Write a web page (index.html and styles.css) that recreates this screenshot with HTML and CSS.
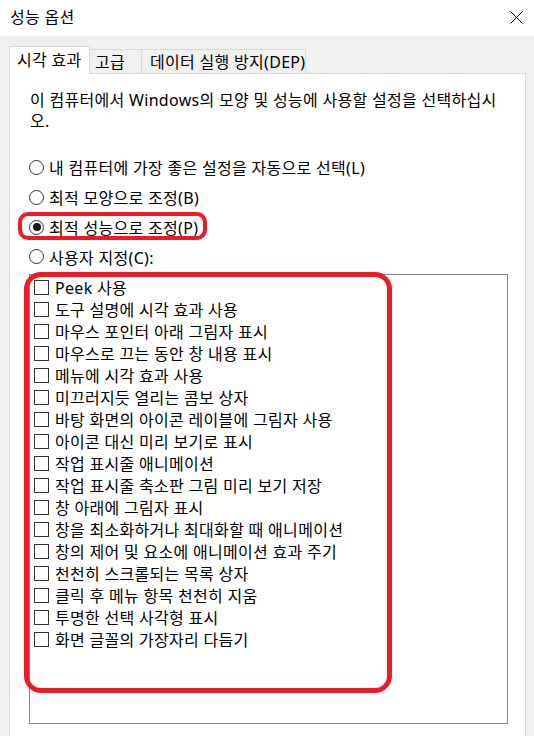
FILE: index.html
```html
<!DOCTYPE html>
<html lang="ko">
<head>
<meta charset="utf-8">
<title>성능 옵션</title>
<link rel="stylesheet" href="styles.css">
</head>
<body>
<div class="window">
  <div class="titlebar">
    <span class="title">성능 옵션</span>
    <svg class="close" width="13" height="13" viewBox="0 0 13 13"><path d="M0.5 0.5 L12.5 12.5 M12.5 0.5 L0.5 12.5" stroke="#000" stroke-width="1" fill="none"/></svg>
  </div>
  <div class="tabs">
    <div class="tab active">시각 효과</div>
    <div class="tab t2">고급</div>
    <div class="tab t3">데이터 실행 방지(DEP)</div>
  </div>
  <div class="panel">
    <p class="desc">이 컴퓨터에서 Windows의 모양 및 성능에 사용할 설정을 선택하십시<br>오.</p>
    <div class="radios">
      <div class="radio-row"><span class="radio"></span><span>내 컴퓨터에 가장 좋은 설정을 자동으로 선택(L)</span></div>
      <div class="radio-row"><span class="radio"></span><span>최적 모양으로 조정(B)</span></div>
      <div class="radio-row"><span class="radio checked"></span><span>최적 성능으로 조정(P)</span></div>
      <div class="radio-row"><span class="radio"></span><span>사용자 지정(C):</span></div>
    </div>
    <div class="listbox">
      <div class="item"><span class="check"></span><span>Peek 사용</span></div>
      <div class="item"><span class="check"></span><span>도구 설명에 시각 효과 사용</span></div>
      <div class="item"><span class="check"></span><span>마우스 포인터 아래 그림자 표시</span></div>
      <div class="item"><span class="check"></span><span>마우스로 끄는 동안 창 내용 표시</span></div>
      <div class="item"><span class="check"></span><span>메뉴에 시각 효과 사용</span></div>
      <div class="item"><span class="check"></span><span>미끄러지듯 열리는 콤보 상자</span></div>
      <div class="item"><span class="check"></span><span>바탕 화면의 아이콘 레이블에 그림자 사용</span></div>
      <div class="item"><span class="check"></span><span>아이콘 대신 미리 보기로 표시</span></div>
      <div class="item"><span class="check"></span><span>작업 표시줄 애니메이션</span></div>
      <div class="item"><span class="check"></span><span>작업 표시줄 축소판 그림 미리 보기 저장</span></div>
      <div class="item"><span class="check"></span><span>창 아래에 그림자 표시</span></div>
      <div class="item"><span class="check"></span><span>창을 최소화하거나 최대화할 때 애니메이션</span></div>
      <div class="item"><span class="check"></span><span>창의 제어 및 요소에 애니메이션 효과 주기</span></div>
      <div class="item"><span class="check"></span><span>천천히 스크롤되는 목록 상자</span></div>
      <div class="item"><span class="check"></span><span>클릭 후 메뉴 항목 천천히 지움</span></div>
      <div class="item"><span class="check"></span><span>투명한 선택 사각형 표시</span></div>
      <div class="item"><span class="check"></span><span>화면 글꼴의 가장자리 다듬기</span></div>
    </div>
  </div>
  <div class="mark mark-small"></div>
  <div class="mark mark-big"></div>
</div>
</body>
</html>
```

FILE: styles.css
```css
* { box-sizing: border-box; }
html, body {
  margin: 0;
  padding: 0;
}
body {
  width: 534px;
  height: 736px;
  overflow: hidden;
  background: #f0f0f0;
  font-family: "Noto Sans", "Noto Sans CJK KR", sans-serif;
  font-size: 16px;
  letter-spacing: 0.3px;
  color: #000;
}
.window {
  position: relative;
  width: 534px;
  height: 736px;
  overflow: hidden;
}
.titlebar {
  height: 36px;
  background: #fff;
  display: flex;
  align-items: center;
  justify-content: space-between;
  padding: 0 11px 0 10px;
}
.title {
  line-height: 20px;
  margin-top: -2px;
}
.close {
  display: block;
  margin-top: -2px;
}
.tabs {
  display: flex;
  align-items: flex-end;
  padding-left: 9px;
  margin-top: 10px;
  height: 27px;
  position: relative;
  z-index: 1;
}
.tab {
  border: 1px solid #d9d9d9;
  border-bottom: none;
  line-height: 20px;
  white-space: nowrap;
}
.tab.active {
  width: 81px;
  height: 28px;
  margin-bottom: -1px;
  background: #fff;
  padding: 3px 0 0 7px;
}
.tab.t2 {
  width: 52px;
  height: 24px;
  border-left: none;
  padding: 2px 0 0 5px;
}
.tab.t3 {
  width: 164px;
  height: 24px;
  border-left: none;
  padding: 2px 0 0 8px;
}
.panel {
  margin-left: 9px;
  width: 517px;
  height: 663px;
  background: #fff;
  border: 1px solid #d9d9d9;
  border-bottom: none;
  padding: 16px 0 0 20px;
}
.desc {
  margin: 0;
  line-height: 21px;
  white-space: nowrap;
}
.radios {
  margin-top: 20px;
}
.radio-row {
  display: flex;
  align-items: center;
  height: 30px;
  margin-left: -1px;
}
.radio-row:last-child { height: 29px; }
.radio {
  width: 15px;
  height: 15px;
  border: 1px solid #333;
  border-radius: 50%;
  margin-right: 5px;
  display: flex;
  align-items: center;
  justify-content: center;
  flex: none;
}
.radio.checked::after {
  content: "";
  width: 8px;
  height: 8px;
  border-radius: 50%;
  background: #1a1a1a;
}
.listbox {
  margin-top: 3px;
  margin-left: -1px;
  width: 479px;
  height: 450px;
  border: 1px solid #828790;
  padding: 1px 0 0 4px;
}
.item {
  display: flex;
  align-items: center;
  height: 22px;
}
.check {
  width: 15px;
  height: 15px;
  border: 1px solid #333;
  margin-right: 6px;
  flex: none;
}
.mark {
  position: absolute;
  border-style: solid;
  border-color: #ed1c24;
}
.mark-small {
  left: 18px;
  top: 212px;
  width: 189px;
  height: 28px;
  border-width: 4px;
  border-radius: 10px;
}
.mark-big {
  left: 24px;
  top: 272px;
  width: 368px;
  height: 421px;
  border-width: 5px;
  border-radius: 17px;
}
```
